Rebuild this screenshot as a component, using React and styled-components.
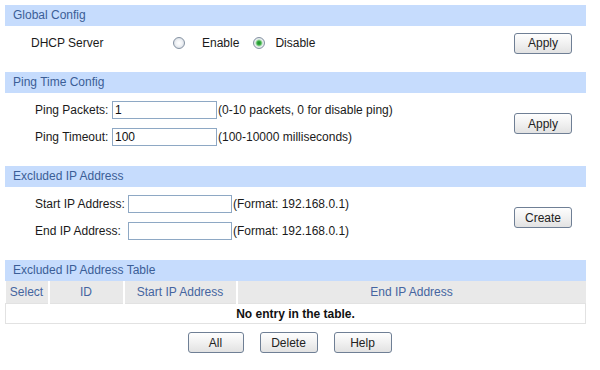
import styled, { createGlobalStyle } from "styled-components";

const GlobalStyle = createGlobalStyle`
  body {
    margin: 0;
    background: #ffffff;
    font-family: "Liberation Sans", Arial, sans-serif;
    font-size: 12px;
    color: #1a1a1a;
  }
`;

function Radio({ checked, gapBefore, gapAfter, children }) {
  return (
    <RadioLabel $gapBefore={gapBefore}>
      <RadioDot $checked={checked} $gapAfter={gapAfter} />
      {children}
    </RadioLabel>
  );
}

function App() {
  return (
    <Page>
      <GlobalStyle />
      <Section>
        <Header>Global Config</Header>
        <Body>
          <Fields $indent={26}>
            <Row>
              <Label $width={142}>DHCP Server</Label>
              <Radio gapAfter={17}>Enable</Radio>
              <Radio checked gapBefore={14} gapAfter={10}>
                Disable
              </Radio>
            </Row>
          </Fields>
          <ButtonCell>
            <Button>Apply</Button>
          </ButtonCell>
        </Body>
      </Section>

      <Section>
        <Header>Ping Time Config</Header>
        <Body>
          <Fields $indent={30}>
            <Row>
              <Label $width={77}>Ping Packets:</Label>
              <Input $width={105} defaultValue="1" />
              <Hint>(0-10 packets, 0 for disable ping)</Hint>
            </Row>
            <Row>
              <Label $width={77}>Ping Timeout:</Label>
              <Input $width={105} defaultValue="100" />
              <Hint>(100-10000 milliseconds)</Hint>
            </Row>
          </Fields>
          <ButtonCell>
            <Button>Apply</Button>
          </ButtonCell>
        </Body>
      </Section>

      <Section>
        <Header>Excluded IP Address</Header>
        <Body>
          <Fields $indent={30}>
            <Row>
              <Label $width={93}>Start IP Address:</Label>
              <Input $width={104} />
              <Hint>(Format: 192.168.0.1)</Hint>
            </Row>
            <Row>
              <Label $width={93}>End IP Address:</Label>
              <Input $width={104} />
              <Hint>(Format: 192.168.0.1)</Hint>
            </Row>
          </Fields>
          <ButtonCell>
            <Button>Create</Button>
          </ButtonCell>
        </Body>
      </Section>

      <Section>
        <Header>Excluded IP Address Table</Header>
        <Table>
          <thead>
            <tr>
              <Th $width={42}>Select</Th>
              <Th $width={73}>ID</Th>
              <Th $width={111}>Start IP Address</Th>
              <Th>End IP Address</Th>
            </tr>
          </thead>
          <tbody>
            <tr>
              <Empty colSpan={4}>No entry in the table.</Empty>
            </tr>
          </tbody>
        </Table>
        <Actions>
          <Button $width={56}>All</Button>
          <Button>Delete</Button>
          <Button>Help</Button>
        </Actions>
      </Section>
    </Page>
  );
}

const Page = styled.div`
  width: 581px;
  padding: 5px 0 0 5px;
`;

const Section = styled.section`
  display: flex;
  flex-direction: column;
`;

const Header = styled.div`
  height: 21px;
  line-height: 21px;
  padding-left: 8px;
  background: #c6dcfd;
  color: #3b5e97;
  font-size: 12px;
`;

const Body = styled.div`
  display: flex;
  align-items: center;
  padding: 5px 14px 0 0;
  margin-bottom: 17px;
`;

const Fields = styled.div`
  flex: 1;
  display: flex;
  flex-direction: column;
  gap: 3px;
  padding-left: ${(p) => p.$indent}px;
`;

const Row = styled.div`
  display: flex;
  align-items: center;
  height: 24px;
  white-space: nowrap;
`;

const Label = styled.span`
  width: ${(p) => p.$width}px;
  flex-shrink: 0;
`;

const RadioLabel = styled.label`
  display: flex;
  align-items: center;
  margin-left: ${(p) => p.$gapBefore || 0}px;
`;

const RadioDot = styled.span`
  box-sizing: border-box;
  width: 12px;
  height: 12px;
  border-radius: 50%;
  border: 1px solid #8592a2;
  margin-right: ${(p) => p.$gapAfter}px;
  background: ${(p) =>
    p.$checked
      ? "radial-gradient(circle, #1d8a28 0, #3cb048 2px, #9fd8a2 3px, #eef1f4 4px, #dfe4ea 5px)"
      : "radial-gradient(circle, #ffffff 0, #f1f3f6 3px, #dde2e8 5px)"};
`;

const Input = styled.input`
  box-sizing: border-box;
  width: ${(p) => p.$width}px;
  height: 18px;
  padding: 0 2px;
  border: 1px solid #8ea8c4;
  font-family: "Liberation Sans", Arial, sans-serif;
  font-size: 12px;
  color: #111;
  outline: none;
`;

const Hint = styled.span`
  margin-left: 1px;
`;

const ButtonCell = styled.div`
  display: flex;
  align-items: center;
`;

const Button = styled.button`
  box-sizing: border-box;
  width: ${(p) => p.$width || 58}px;
  height: 21px;
  padding: 0;
  border: 1px solid #6f7f95;
  border-radius: 3px;
  background: linear-gradient(#fefefe, #f1f1f1 50%, #e2e2e2);
  font-family: "Liberation Sans", Arial, sans-serif;
  font-size: 12px;
  color: #222;
  cursor: pointer;
`;

const Table = styled.table`
  width: 581px;
  border-collapse: collapse;
  table-layout: fixed;
`;

const Th = styled.th`
  width: ${(p) => (p.$width ? `${p.$width}px` : "auto")};
  height: 22px;
  padding: 0;
  background: #e9e9e9;
  border-left: 2px solid #ffffff;
  color: #4565a0;
  font-weight: normal;
  font-size: 12px;
  &:first-child {
    border-left: none;
  }
`;

const Empty = styled.td`
  height: 19px;
  padding: 0;
  border: 1px solid #e2e2e2;
  text-align: center;
  font-weight: bold;
  color: #111;
`;

const Actions = styled.div`
  display: flex;
  justify-content: center;
  gap: 16px;
  padding: 8px 12px 0 0;
`;

export default App;
